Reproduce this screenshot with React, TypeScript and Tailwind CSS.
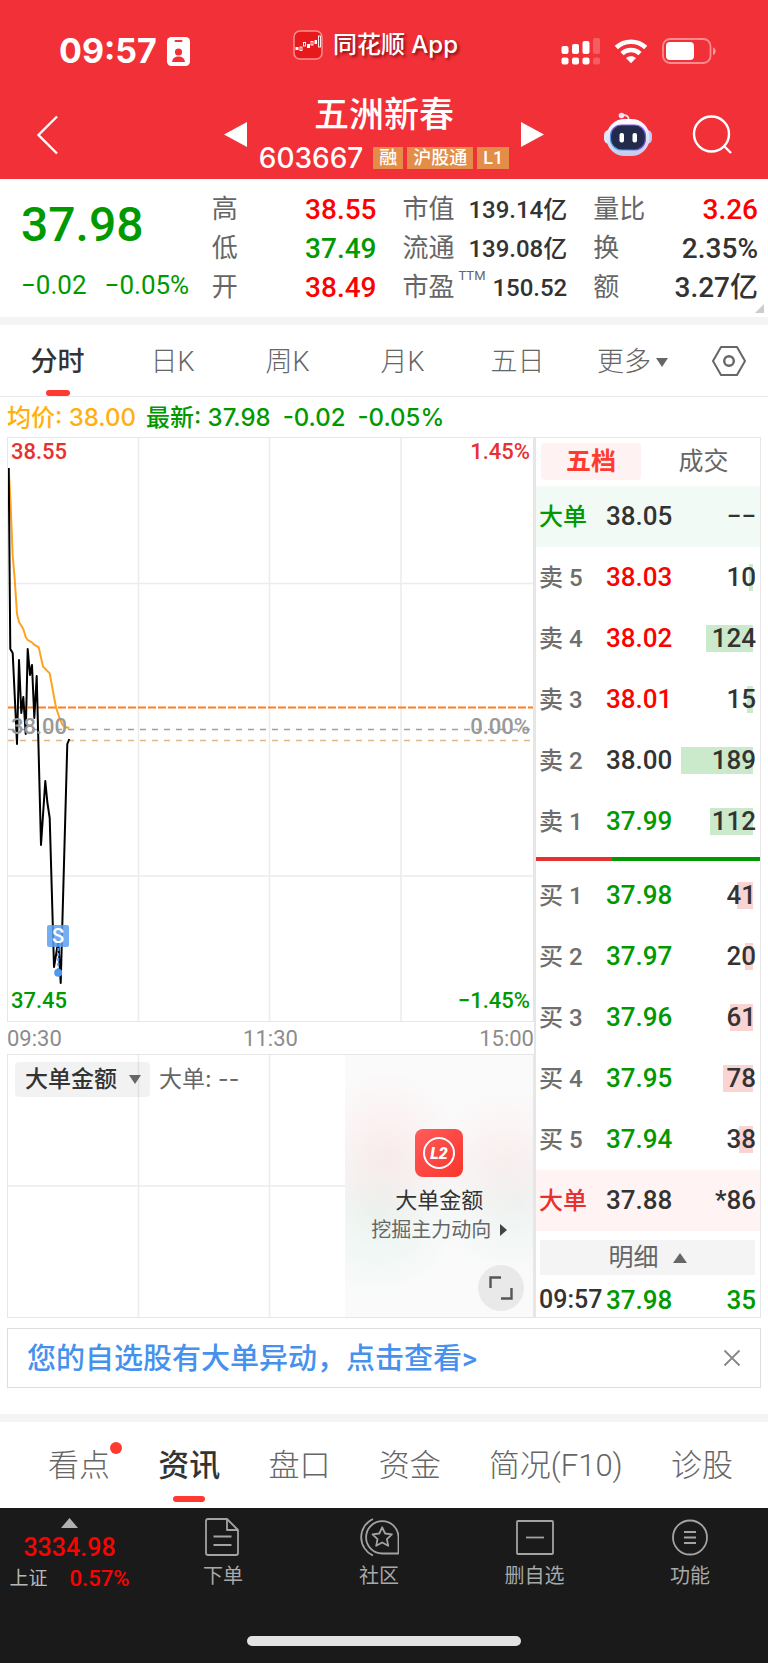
import React from "react";

const CJK = "[font-family:Roboto,'Noto_Sans_CJK_SC',sans-serif]";
const INTER = "[font-family:Inter,'Noto_Sans_CJK_SC',sans-serif]";

type Level = { label: string; no: string; price: string; tone: string; volume: number };

const asks: Level[] = [
  { label: "卖", no: "5", price: "38.03", tone: "text-[#ff0000]", volume: 10 },
  { label: "卖", no: "4", price: "38.02", tone: "text-[#ff0000]", volume: 124 },
  { label: "卖", no: "3", price: "38.01", tone: "text-[#ff0000]", volume: 15 },
  { label: "卖", no: "2", price: "38.00", tone: "text-[#333333]", volume: 189 },
  { label: "卖", no: "1", price: "37.99", tone: "text-[#009900]", volume: 112 },
];

const bids: Level[] = [
  { label: "买", no: "1", price: "37.98", tone: "text-[#009900]", volume: 41 },
  { label: "买", no: "2", price: "37.97", tone: "text-[#009900]", volume: 20 },
  { label: "买", no: "3", price: "37.96", tone: "text-[#009900]", volume: 61 },
  { label: "买", no: "4", price: "37.95", tone: "text-[#009900]", volume: 78 },
  { label: "买", no: "5", price: "37.94", tone: "text-[#009900]", volume: 38 },
];

const priceLine =
  "8.7,468 10.3,649 12.7,653 17,744 19,660 21.3,713 23.3,697 25.7,734 27.7,649 30,675 32,665 34.3,718 36.7,676 41,845 45.3,781 47.3,802 49.7,818 54,967 56,955 58.3,941 60.7,983 67.3,744 69.3,739";
const averageLine =
  "8.7,468 10.7,506 12.7,556 14.7,579 17,614 19,622 23.3,629 25.7,637 27.7,640 32,642.4 34.3,644.7 38.7,647.4 43,666.5 49.7,673.4 56,707.5 59.5,718 62.7,725 65,727 69.3,728";

function StatusBar() {
  return (
    <div className="flex items-center justify-between pl-[59px] pr-[52px] pt-[30px]">
      <div className="flex items-center gap-[10px]">
        <span className={`${INTER} text-[34px] leading-[42px] font-bold`}>09:57</span>
        <svg width="23" height="29" viewBox="0 0 23 29" aria-hidden="true">
          <rect width="23" height="29" rx="4.5" fill="#fff" />
          <rect x="7.5" y="3" width="8" height="2" rx="1" fill="#f23037" />
          <circle cx="11.5" cy="15" r="3.6" fill="#f23037" />
          <path d="M5 25c.6-4 3-5.6 6.500-5.600s5.900 1.600 6.500 5.600z" fill="#f23037" />
        </svg>
      </div>
      <div className="flex items-center gap-[10px] pb-3">
        <svg width="30" height="30" viewBox="0 0 30 30" aria-hidden="true">
          <rect x="1" y="1" width="28" height="28" rx="6" fill="#e8191c" stroke="#f98f90" strokeWidth="1.5" />
          <g fill="#fff">
            <rect x="2.500" y="17" width="3" height="3" />
            <rect x="14" y="14" width="3" height="4" />
            <rect x="21.500" y="10" width="2.500" height="4" />
          </g>
          <g fill="none" stroke="#fff" strokeWidth=".9">
            <rect x="7" y="17" width="2" height="3.500" />
            <rect x="10.500" y="12.500" width="2" height="3.500" />
            <rect x="18" y="11.500" width="2" height="3.500" />
            <rect x="25.500" y="6" width="2" height="11" />
          </g>
        </svg>
        <span
          className={`${INTER} text-[24px] leading-[30px] font-medium whitespace-nowrap [text-shadow:2px_2px_3px_rgba(90,0,0,0.7)]`}
        >
          同花顺 App
        </span>
      </div>
      <svg width="155" height="28" viewBox="561 37 155 28" aria-hidden="true">
        <g fill="#fff">
          <rect x="561.500" y="46" width="7" height="8" rx="2" />
          <rect x="572" y="44" width="7" height="10" rx="2" />
          <rect x="582.500" y="41" width="7" height="13" rx="2" />
          <rect x="561.500" y="57.500" width="7" height="7" rx="2" />
          <rect x="572" y="57.500" width="7" height="7" rx="2" />
          <rect x="582.500" y="57.500" width="7" height="7" rx="2" />
        </g>
        <g fill="#fff" opacity=".22">
          <rect x="593" y="38" width="7" height="16" rx="2" />
          <rect x="593" y="57.500" width="7" height="7" rx="2" />
        </g>
        <g fill="none" stroke="#fff" strokeWidth="4.600">
          <path d="M616.300 47.500a21.500 21.500 0 0 1 29.400 0" />
          <path d="M622 53.600a13.200 13.200 0 0 1 18 0" />
        </g>
        <path d="M631 63.200l-5-5.200c2.900-2.500 7.100-2.500 10 0z" fill="#fff" />
        <rect x="663" y="39" width="47.500" height="24" rx="7" fill="none" stroke="#fff" strokeOpacity=".45" strokeWidth="1.800" />
        <rect x="666" y="42" width="28" height="18" rx="4" fill="#fff" />
        <path d="M713 47.500c3.500 1 3.500 6.500 0 7.500z" fill="#fff" opacity=".5" />
      </svg>
    </div>
  );
}

function Tag({ children }: { children: React.ReactNode }) {
  return (
    <span className="bg-[#e38d48] px-[6px] text-[18px] leading-[22px] font-medium">{children}</span>
  );
}

function Header() {
  return (
    <header className="bg-[#f23037] text-white">
      <StatusBar />
      <div className="mt-[18px] grid h-[89px] grid-cols-[1fr_auto_1fr] items-center gap-3">
        <div className="flex items-center justify-between pl-9">
          <button type="button" aria-label="返回">
            <svg width="23" height="40" viewBox="0 0 23 40" fill="none" stroke="#fff" strokeWidth="2.400">
              <path d="M21 1.500L2.500 20 21 38.500" />
            </svg>
          </button>
          <button type="button" aria-label="上一只">
            <svg width="23" height="25" viewBox="0 0 23 25" fill="#fff">
              <path d="M0 12.500L23 0v25z" />
            </svg>
          </button>
        </div>
        <div className="flex flex-col items-center pt-1">
          <h1 className="text-[35px] leading-[42px] font-medium">五洲新春</h1>
          <div className="flex items-center gap-1">
            <span className={`${INTER} mr-[6px] text-[28px] leading-[42px] font-medium`}>603667</span>
            <Tag>融</Tag>
            <Tag>沪股通</Tag>
            <Tag>L1</Tag>
          </div>
        </div>
        <div className="flex items-center justify-between pr-9">
          <button type="button" aria-label="下一只">
            <svg width="23" height="25" viewBox="0 0 23 25" fill="#fff">
              <path d="M23 12.500L0 0v25z" />
            </svg>
          </button>
          <div className="flex items-center gap-10">
            <button type="button" aria-label="智能助手">
              <svg width="48" height="45" viewBox="0 0 48 45">
                <defs>
                  <linearGradient id="shell" x1="0" y1="0" x2="0" y2="1">
                    <stop offset="0" stopColor="#ffffff" />
                    <stop offset="1" stopColor="#c5c9ee" />
                  </linearGradient>
                  <linearGradient id="rim" x1="0" y1="1" x2="1" y2="0">
                    <stop offset="0" stopColor="#37c8f0" />
                    <stop offset=".5" stopColor="#7a4de0" />
                    <stop offset="1" stopColor="#8f5cf0" />
                  </linearGradient>
                </defs>
                <path d="M17.500 3.500c5-1 7.500.5 7.500 5" fill="none" stroke="#e6e8fa" strokeWidth="1.800" />
                <circle cx="17.500" cy="3.500" r="2.800" fill="#e3e9fb" />
                <rect x="0" y="18" width="10" height="14" rx="5" fill="#e4e6f8" />
                <rect x="38" y="18" width="10" height="14" rx="5" fill="#c5c9ee" />
                <rect x="2.500" y="7" width="43" height="37" rx="18" fill="url(#shell)" />
                <rect x="6.500" y="13" width="35" height="25" rx="11" fill="#232b4d" stroke="url(#rim)" strokeWidth="1.200" />
                <rect x="15.500" y="21" width="4.500" height="9.500" rx="2" fill="#fff" />
                <rect x="28.500" y="21" width="4.500" height="9.500" rx="2" fill="#fff" />
              </svg>
            </button>
            <button type="button" aria-label="搜索">
              <svg width="40" height="40" viewBox="0 0 40 40" fill="none" stroke="#fff" strokeWidth="2.400">
                <circle cx="19.500" cy="19" r="17.500" />
                <path d="M32 31l7 7" />
              </svg>
            </button>
          </div>
        </div>
      </div>
    </header>
  );
}

function Stat({ label, value, tone, compact, note }: { label: string; value: string; tone: string; compact?: boolean; note?: string }) {
  return (
    <div className="flex h-[39px] items-center justify-between whitespace-nowrap">
      <dt className="flex text-[26px] text-[#666666]">
        {label}
        {note && <span className="ml-1 text-[13px] leading-4">{note}</span>}
      </dt>
      <dd className={`${tone} font-medium ${compact ? "text-[24px]" : "text-[28px]"}`}>{value}</dd>
    </div>
  );
}

function Quote() {
  return (
    <section className="relative grid grid-cols-4 gap-x-[26px] border-b-8 border-[#f4f4f4] pt-[11px] pr-[10px] pb-[10px] pl-[21px]">
      <div className="text-[#009900]">
        <div className="text-[48px] leading-[70px] font-medium">37.98</div>
        <div className="flex gap-[18px] pt-1 text-[26px] leading-[43px] whitespace-nowrap">
          <span>−0.02</span>
          <span>−0.05%</span>
        </div>
      </div>
      <dl>
        <Stat label="高" value="38.55" tone="text-[#ff0000]" />
        <Stat label="低" value="37.49" tone="text-[#009900]" />
        <Stat label="开" value="38.49" tone="text-[#ff0000]" />
      </dl>
      <dl>
        <Stat label="市值" value="139.14亿" tone="text-[#333333]" compact />
        <Stat label="流通" value="139.08亿" tone="text-[#333333]" compact />
        <Stat label="市盈" note="TTM" value="150.52" tone="text-[#333333]" compact />
      </dl>
      <dl>
        <Stat label="量比" value="3.26" tone="text-[#ff0000]" />
        <Stat label="换" value="2.35%" tone="text-[#333333]" />
        <Stat label="额" value="3.27亿" tone="text-[#333333]" />
      </dl>
      <svg className="absolute right-1 bottom-1" width="9" height="9" viewBox="0 0 9 9" fill="#cccccc" aria-hidden="true">
        <path d="M9 0v9H0z" />
      </svg>
    </section>
  );
}

function PeriodTabs() {
  return (
    <nav className="grid h-[72px] grid-cols-[repeat(6,115fr)_78fr] border-b border-[#eaeaea] text-[27px] text-[#666666]">
      <button type="button" className="relative pt-[3px] font-medium text-[#333333]">
        分时
        <span className="absolute bottom-0 left-1/2 h-[6px] w-6 -translate-x-1/2 rounded-full bg-[#ff3a30]" />
      </button>
      {["日K", "周K", "月K", "五日"].map((t) => (
        <button type="button" key={t} className="pt-[3px] font-light">
          {t}
        </button>
      ))}
      <button type="button" className="flex items-center justify-center gap-[5px] pt-[3px] font-light">
        更多
        <svg width="12" height="9" viewBox="0 0 12 9" fill="#666666" aria-hidden="true">
          <path d="M0 0h12L6 9z" />
        </svg>
      </button>
      <button type="button" aria-label="设置" className="flex items-center justify-center">
        <svg width="34" height="30" viewBox="0 0 34 30" fill="none" stroke="#666666" strokeWidth="2">
          <path d="M9 1h16l8 14-8 14H9L1 15z" strokeLinejoin="round" />
          <circle cx="17" cy="15" r="4.800" strokeWidth="2.400" />
        </svg>
      </button>
    </nav>
  );
}

function PriceChart() {
  return (
    <div className="relative h-[585px] border border-[#e6e6e6]">
      <svg className="absolute inset-0 h-full w-full" viewBox="8 438 525 583" preserveAspectRatio="none" fill="none" aria-hidden="true">
        <g stroke="#ececec" strokeWidth="1.500">
          <path d="M138.500 438v583M269.500 438v583M401 438v583M8 583.500h525M8 876h525" />
        </g>
        <path d="M8 707.500h525" stroke="#ff7f1e" strokeWidth="2" strokeDasharray="8 2" />
        <path d="M8 729.500h525" stroke="#a0a0a0" strokeWidth="1.600" strokeDasharray="6 6" />
        <path d="M8 740.500h525" stroke="#deb887" strokeWidth="1.400" strokeDasharray="6 6" />
        <polyline points={averageLine} stroke="#ffa21f" strokeWidth="2" strokeLinejoin="round" />
        <polyline points={priceLine} stroke="#000000" strokeWidth="2" strokeLinejoin="round" />
        <path d="M58.300 948v22" stroke="#4f97ee" strokeWidth="2" strokeDasharray="3 2" />
        <circle cx="58.200" cy="972.700" r="4" fill="#4f97ee" />
      </svg>
      <span className="absolute top-[487px] left-[39px] w-[22px] rounded-[2px] bg-[#5c9ff2]/85 text-center text-[20px] leading-[22px] font-medium text-white">
        S
      </span>
      <div className="relative flex h-full flex-col justify-between px-[3px] text-[22px] leading-7 font-medium">
        <div className="flex justify-between text-[#e93030]">
          <span>38.55</span>
          <span>1.45%</span>
        </div>
        <div className="flex justify-between text-[#999999]">
          <span>38.00</span>
          <span>0.00%</span>
        </div>
        <div className="flex justify-between pb-[6px] text-[#009900]">
          <span>37.45</span>
          <span>−1.45%</span>
        </div>
      </div>
    </div>
  );
}

function AmountChart() {
  return (
    <div className="relative h-[264px] border border-[#e6e6e6]">
      <svg className="absolute inset-0 h-full w-full" viewBox="8 1055 525 262" preserveAspectRatio="none" fill="none" stroke="#ececec" strokeWidth="1.500" aria-hidden="true">
        <path d="M138.500 1055v262M269.500 1055v262M8 1186h525" />
      </svg>
      <div className="relative grid h-full grid-cols-[338fr_188fr]">
        <div className="flex items-start gap-[9px] pt-[7px] pl-[7px] whitespace-nowrap">
          <div className="relative">
            <select
              aria-label="指标"
              defaultValue="大单金额"
              className={`${CJK} h-[35px] w-[135px] appearance-none rounded bg-black/5 pl-[10px] text-[23px] leading-[35px] font-medium text-[#333333]`}
            >
              <option>大单金额</option>
            </select>
            <svg className="pointer-events-none absolute top-[13px] right-[9px]" width="12" height="9" viewBox="0 0 12 9" fill="#666666" aria-hidden="true">
              <path d="M0 0h12L6 9z" />
            </svg>
          </div>
          <span className={`${INTER} text-[23px] leading-[35px] text-[#666666]`}>大单: --</span>
        </div>
        <div className="relative flex flex-col items-center bg-[#fafafa] bg-[radial-gradient(ellipse_at_22%_38%,rgba(255,218,221,0.45),transparent_36%),radial-gradient(ellipse_at_85%_40%,rgba(255,224,226,0.4),transparent_32%),radial-gradient(ellipse_at_18%_60%,rgba(218,240,231,0.55),transparent_38%),radial-gradient(ellipse_at_90%_56%,rgba(222,238,233,0.5),transparent_36%)] pt-[74px]">
          <svg width="48" height="48" viewBox="0 0 48 48" aria-hidden="true">
            <defs>
              <linearGradient id="level" x1="0" y1="0" x2="1" y2="1">
                <stop offset="0" stopColor="#ff5c5c" />
                <stop offset="1" stopColor="#f9352b" />
              </linearGradient>
            </defs>
            <rect width="48" height="48" rx="8" fill="url(#level)" />
            <circle cx="24" cy="24" r="15" fill="none" stroke="#fff" strokeWidth="2" />
            <text x="24" y="30" textAnchor="middle" fill="#fff" fontSize="16" fontWeight="900" fontStyle="italic" fontFamily="Roboto, sans-serif">
              L2
            </text>
          </svg>
          <strong className="mt-2 text-[22px] leading-8 font-normal text-[#333333]">大单金额</strong>
          <a href="#level2" className="flex items-center gap-[9px] text-[20px] leading-[26px] whitespace-nowrap text-[#666666]">
            挖掘主力动向
            <svg width="7" height="12" viewBox="0 0 7 12" fill="#444444" aria-hidden="true">
              <path d="M0 0l7 6-7 6z" />
            </svg>
          </a>
          <button type="button" aria-label="全屏" className="absolute right-[9px] bottom-[6px] flex size-[46px] items-center justify-center rounded-full bg-[#e9e9e9]">
            <svg width="24" height="24" viewBox="0 0 24 24" fill="none" stroke="#555555" strokeWidth="2.400">
              <path d="M1.500 12V1.500H12M22.500 12v10.500H12" />
            </svg>
          </button>
        </div>
      </div>
    </div>
  );
}

function BigOrderRow({ bg, tone, price, volume }: { bg: string; tone: string; price: string; volume: string }) {
  return (
    <tr className={`h-[61px] ${bg}`}>
      <th scope="row" className={`pl-[3px] text-left text-[24px] font-medium ${tone}`}>大单</th>
      <td>{price}</td>
      <td className="pr-1 text-right">{volume}</td>
    </tr>
  );
}

function LevelRow({ level, bar }: { level: Level; bar: string }) {
  return (
    <tr className="h-[61px]">
      <th scope="row" className="pl-[3px] text-left text-[24px] font-medium text-[#6e6e6e]">
        {level.label} {level.no}
      </th>
      <td className={level.tone}>{level.price}</td>
      <td className="relative pr-1 text-right">
        <span
          className={`absolute top-[17px] right-[7px] h-[27px] ${bar}`}
          style={{ width: Math.round(level.volume * 0.38) }}
        />
        <span className="relative">{level.volume}</span>
      </td>
    </tr>
  );
}

function Columns() {
  return (
    <colgroup>
      <col className="w-[70px]" />
      <col className="w-[70px]" />
      <col />
    </colgroup>
  );
}

const bookTable = "w-full table-fixed border-collapse text-[26px] font-medium text-[#333333]";

function OrderBook() {
  return (
    <aside className="border-y border-r border-l-2 border-[#e6e6e6]">
      <div className="grid grid-cols-[101fr_114fr] gap-x-[6px] pt-[5px] pb-[6px] pl-[5px] text-[25px] leading-[37px]">
        <button type="button" className="rounded bg-[#fff2f2] font-bold text-[#ff3a30]">五档</button>
        <button type="button" className="text-[#666666]">成交</button>
      </div>
      <table className={bookTable}>
        <Columns />
        <tbody>
          <BigOrderRow bg="bg-[#f2faf6]" tone="text-[#009900]" price="38.05" volume="−−" />
          {asks.map((l) => (
            <LevelRow key={l.no} level={l} bar="bg-[#cbe9cb]" />
          ))}
        </tbody>
      </table>
      <div className="mt-[5px] mb-1 flex h-1">
        <div className="flex-[34] bg-[#e93030]" />
        <div className="flex-[66] bg-[#009900]" />
      </div>
      <table className={bookTable}>
        <Columns />
        <tbody>
          {bids.map((l) => (
            <LevelRow key={l.no} level={l} bar="bg-[#fad3d3]" />
          ))}
          <BigOrderRow bg="bg-[#fff3f3]" tone="text-[#e93030]" price="37.88" volume="*86" />
        </tbody>
      </table>
      <button type="button" className="mx-1 mt-[9px] flex h-[35px] w-[calc(100%-9px)] items-center justify-center gap-[14px] bg-[#f4f4f4] text-[25px] text-[#666666]">
        明细
        <svg width="14" height="10" viewBox="0 0 14 10" fill="#666666" aria-hidden="true">
          <path d="M0 10h14L7 0z" />
        </svg>
      </button>
      <table className={bookTable}>
        <Columns />
        <tbody>
          <tr className="h-[42px] leading-8">
            <td className="pt-2 pl-[3px] text-[25px]">09:57</td>
            <td className="pt-2 text-[#009900]">37.98</td>
            <td className="pt-2 pr-1 text-right text-[#009900]">35</td>
          </tr>
        </tbody>
      </table>
    </aside>
  );
}

function SectionTabs() {
  return (
    <nav className="flex h-[86px] justify-between pr-[35px] pl-12 text-[31px] text-[#666666]">
      <button type="button" className="relative pt-[2px] font-light">
        看点
        <span className="absolute top-5 -right-3 size-3 rounded-full bg-[#ff3a30]" />
      </button>
      <button type="button" className="relative pt-[2px] font-medium text-[#333333]">
        资讯
        <span className="absolute bottom-[6px] left-1/2 h-[6px] w-8 -translate-x-1/2 rounded-full bg-[#ff3a30]" />
      </button>
      {["盘口", "资金", "简况(F10)", "诊股"].map((t) => (
        <button type="button" key={t} className="pt-[2px] font-light">
          {t}
        </button>
      ))}
    </nav>
  );
}

function NavItem({ label, children }: { label: string; children: React.ReactNode }) {
  return (
    <button type="button" className="flex flex-col items-center gap-[6px] text-[20px] leading-7 text-[#a8a8a8]">
      <svg width="40" height="38" viewBox="0 0 40 38" fill="none" stroke="#a3a3a3" strokeWidth="1.800" strokeLinejoin="round" aria-hidden="true">
        {children}
      </svg>
      {label}
    </button>
  );
}

function BottomBar() {
  return (
    <footer className="bg-[#1a1a1a] pt-[10px] pb-[17px]">
      <div className="grid grid-cols-[145fr_156fr_156fr_155fr_156fr] items-start">
        <button type="button" className="flex flex-col items-center pr-[6px] font-medium text-[#ff0000]">
          <svg width="17" height="10" viewBox="0 0 17 10" fill="#b0b0b0" aria-hidden="true">
            <path d="M0 10h17L8.500 0z" />
          </svg>
          <span className="mt-1 text-[25px] leading-8">3334.98</span>
          <span className="flex items-center gap-[22px] text-[22px] leading-[30px]">
            <span className="text-[19px] font-normal text-[#b8b8b8]">上证</span>
            0.57%
          </span>
        </button>
        <NavItem label="下单">
          <path d="M3 3q0-2 2-2h19l11 11v23q0 2-2 2H5q-2 0-2-2z" />
          <path d="M24 1v11h11M10.500 18.500h18M10.500 27h18" />
        </NavItem>
        <NavItem label="社区">
          <path d="M23.500 35.500a16.200 16.200 0 1 1 16-16.200V35.500z" />
          <path d="M14 1a20 20 0 0 0 0 36.500" />
          <path d="M23.200 9.300l2.900 6.200 6.800.9-5 4.700 1.300 6.700-6-3.300-6 3.300 1.300-6.700-5-4.700 6.800-.9z" />
        </NavItem>
        <NavItem label="删自选">
          <rect x="2" y="3" width="36" height="33" rx="1" />
          <path d="M11 19.500h18" />
        </NavItem>
        <NavItem label="功能">
          <circle cx="20" cy="19.500" r="17" />
          <path d="M14 14h12M14 19.500h12M14 25h12" />
        </NavItem>
      </div>
      <div className="mx-auto mt-[42px] h-[10px] w-[274px] rounded-full bg-[#e3e3e3]" />
    </footer>
  );
}

export default function App() {
  return (
    <div className={`${CJK} bg-white`}>
      <Header />
      <Quote />
      <PeriodTabs />
      <div className={`${INTER} flex h-10 items-center px-[7px] pt-[2px] text-[24px] font-medium whitespace-nowrap text-[#009900]`}>
        <span className="text-[#ffb010]">均价: 38.00</span>
        <span className="ml-[10px]">最新: 37.98</span>
        <span className="ml-3">-0.02</span>
        <span className="ml-3">-0.05%</span>
      </div>
      <main className="mx-[7px] grid grid-cols-[527fr_227fr]">
        <div>
          <PriceChart />
          <div className="flex h-8 items-center justify-between text-[22px] text-[#8c8c8c]">
            <span>09:30</span>
            <span>11:30</span>
            <span>15:00</span>
          </div>
          <AmountChart />
        </div>
        <OrderBook />
      </main>
      <div className="mx-[7px] mt-[10px] mb-[26px] flex h-[60px] items-center justify-between border border-[#dddddd] px-[19px]">
        <a href="#alerts" className="pt-1 text-[29px] font-medium whitespace-nowrap text-[#4691ee]">
          您的自选股有大单异动，点击查看&gt;
        </a>
        <button type="button" aria-label="关闭">
          <svg width="18" height="18" viewBox="0 0 18 18" stroke="#888888" strokeWidth="1.800">
            <path d="M1.500 1.500l15 15M16.500 1.500l-15 15" />
          </svg>
        </button>
      </div>
      <div className="h-2 bg-[#f4f4f4]" />
      <SectionTabs />
      <BottomBar />
    </div>
  );
}
